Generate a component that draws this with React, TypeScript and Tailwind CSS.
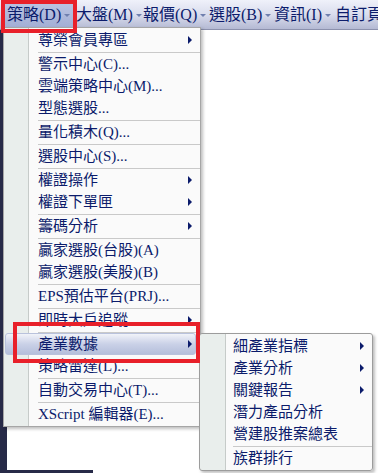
import clsx from "clsx"

type Item = { label: string; arrow?: boolean; sep?: boolean; active?: boolean }

const mainItems: Item[] = [
  { label: "尊榮會員專區", arrow: true, sep: true },
  { label: "警示中心(C)..." },
  { label: "雲端策略中心(M)..." },
  { label: "型態選股...", sep: true },
  { label: "量化積木(Q)...", sep: true },
  { label: "選股中心(S)...", sep: true },
  { label: "權證操作", arrow: true },
  { label: "權證下單匣", arrow: true, sep: true },
  { label: "籌碼分析", arrow: true, sep: true },
  { label: "贏家選股(台股)(A)" },
  { label: "贏家選股(美股)(B)", sep: true },
  { label: "EPS預估平台(PRJ)...", sep: true },
  { label: "即時大戶追蹤", arrow: true, sep: true },
  { label: "產業數據", arrow: true, active: true },
  { label: "策略雷達(L)...", sep: true },
  { label: "自動交易中心(T)...", sep: true },
  { label: "XScript 編輯器(E)..." },
]

const subItems: Item[] = [
  { label: "細產業指標", arrow: true },
  { label: "產業分析", arrow: true },
  { label: "關鍵報告", arrow: true },
  { label: "潛力產品分析" },
  { label: "營建股推案總表", sep: true },
  { label: "族群排行" },
]

const bar = [
  { label: "策略(D)", w: "w-[69px]", selected: true },
  { label: "大盤(M)", w: "w-[67px]" },
  { label: "報價(Q)", w: "w-[66px]" },
  { label: "選股(B)", w: "w-[65px]" },
  { label: "資訊(I)", w: "w-[61px]" },
]

const MenuList = ({ items, textPad }: { items: Item[]; textPad: string }) => (
  <>
    {items.map((it) => (
      <div key={it.label}>
        <div className={clsx("relative flex h-[22px] items-center pr-[8px]", textPad)}>
          {it.active && (
            <div className="absolute inset-y-0 left-[1px] right-[4px] rounded-[3px] border border-[#b9c2dc] bg-gradient-to-b from-[#f1f3f9] via-[#cad1e7] to-[#b5bfdb]" />
          )}
          <span className="relative whitespace-nowrap text-[15px] leading-none text-[#0b1b6b]">{it.label}</span>
          {it.arrow && (
            <span className="relative ml-auto h-0 w-0 border-y-[4px] border-l-[4px] border-y-transparent border-l-[#0b1b6b]" />
          )}
        </div>
        {it.sep && (
          <div className={clsx("flex h-[2px] items-center", textPad)}>
            <div className="h-px flex-1 bg-[#c9c9c9]" />
          </div>
        )}
      </div>
    ))}
  </>
)

const App = () => {
  return (
    <div className="relative flex h-[473px] w-[378px] flex-col overflow-hidden bg-white font-['Liberation_Serif','Noto_Sans_CJK_TC',serif]">
      <div className="flex h-[30px] shrink-0 items-start border-b border-[#8c91ad] bg-gradient-to-b from-[#eff1fa] via-[#dadded] to-[#b4b9d3] pl-[5px]">
        {bar.map((b) => (
          <div
            key={b.label}
            className={clsx(
              "mt-[1px] flex h-[27px] shrink-0 items-center pl-[2px]",
              b.w,
              b.selected && "bg-gradient-to-b from-[#bcc5e3] to-[#a2aed5]"
            )}
          >
            <span className="whitespace-nowrap text-[16px] leading-none text-[#0c1c6c]">{b.label}</span>
            <span className="ml-[3px] mt-[2px] h-0 w-0 border-x-[3px] border-t-[3px] border-x-transparent border-t-[#6f7fae]" />
          </div>
        ))}
        <span className="mt-[1px] flex h-[27px] items-center whitespace-nowrap pl-[2px] text-[16px] leading-none text-[#0c1c6c]">
          自訂頁面
        </span>
      </div>

      <div className="flex flex-1">
        <div className="w-[7px] bg-[#272a48]" />
        <div className="flex-1 bg-white" />
      </div>
      <div className="h-[3px] w-[93px] bg-[#272a48]" />

      {/* main dropdown */}
      <div className="absolute left-[3px] top-[27px] w-[198px] border border-[#a6a6a6] bg-[linear-gradient(to_right,#e9eeec_24px,#c6cbc9_24px,#c6cbc9_25px,#fafafa_25px)] py-[1px] shadow-[2px_2px_3px_rgba(0,0,0,0.25)]">
        <MenuList items={mainItems} textPad="pl-[34px]" />
      </div>

      {/* sub menu */}
      <div className="absolute left-[199px] top-[333px] w-[174px] rounded-[3px] border border-[#9c9c9c] bg-[linear-gradient(to_right,#e9eeec_25px,#c6cbc9_25px,#c6cbc9_26px,#fafafa_26px)] py-[1px] shadow-[2px_2px_3px_rgba(0,0,0,0.25)]">
        <MenuList items={subItems} textPad="pl-[33px]" />
      </div>

      {/* annotation boxes */}
      <div className="absolute left-[1px] top-0 h-[33px] w-[76px] border-4 border-[#e8202a]" />
      <div className="absolute left-[13px] top-[322px] h-[41px] w-[187px] border-4 border-[#e8202a]" />
    </div>
  )
}

export default App
